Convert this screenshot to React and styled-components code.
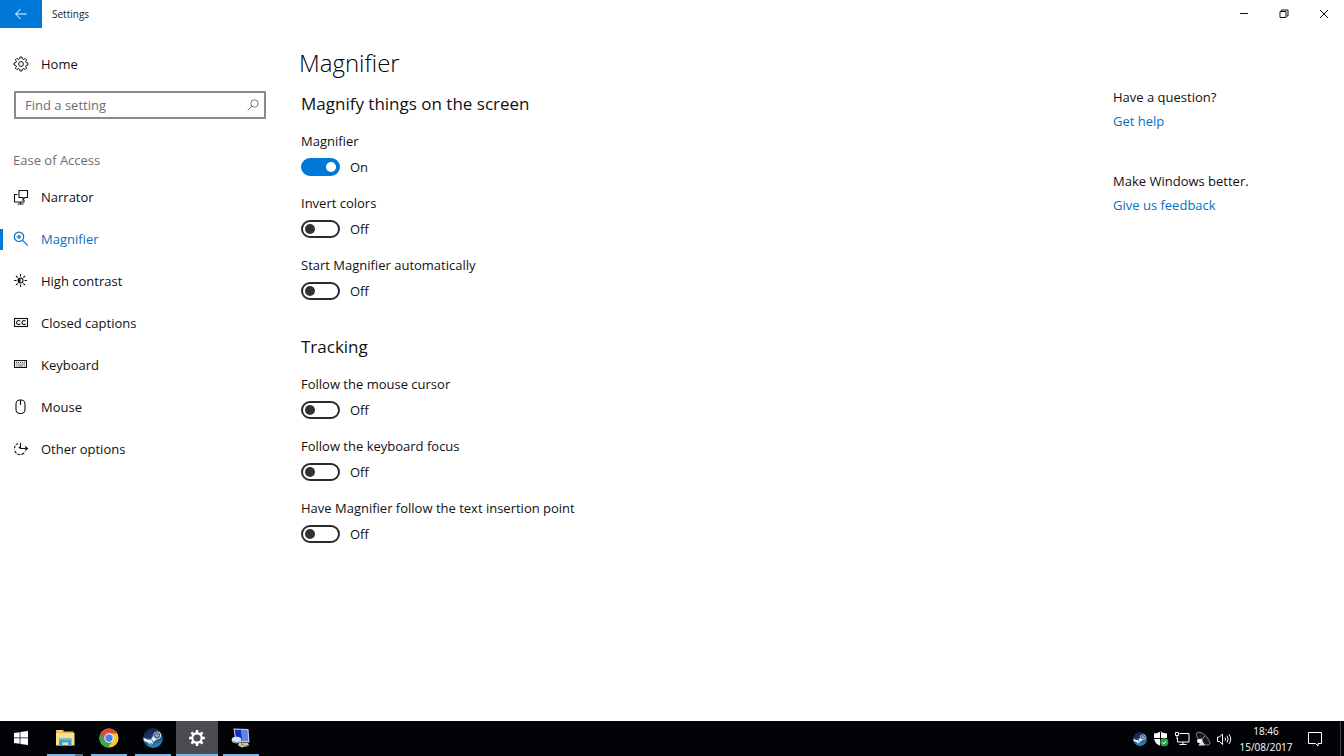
import React, { useState } from 'react';
import styled, { createGlobalStyle, css } from 'styled-components';

const GlobalStyle = createGlobalStyle`
  *, *::before, *::after { box-sizing: border-box; }
  body {
    margin: 0;
    background: #fff;
    color: #111;
    font-family: "Open Sans", "Noto Sans", sans-serif;
    font-size: 13px;
    line-height: 20px;
  }
  button, input { font: inherit; color: inherit; }
  h1, h2, p, ul { margin: 0; padding: 0; }
  svg { display: block; flex: none; }
`;

const Desktop = styled.div`
  display: flex;
  flex-direction: column;
  min-height: 100vh;
`;

const TitleBar = styled.header`
  display: flex;
  height: 28px;
`;

const BarButton = styled.button`
  display: flex;
  align-items: center;
  justify-content: center;
  width: ${(p) => (p.$accent ? 42 : 40)}px;
  border: 0;
  padding: 0;
  color: ${(p) => (p.$accent ? '#fff' : '#111')};
  background: ${(p) => (p.$accent ? '#0078d7' : 'transparent')};
`;

const WindowTitle = styled.span`
  flex: 1;
  padding-left: 10px;
  font-size: 10px;
  line-height: 28px;
  color: #222;
`;

const Body = styled.div`
  display: flex;
  flex: 1;
`;

const Sidebar = styled.nav`
  width: 280px;
  padding-top: 15px;
`;

const NavLink = styled.a`
  display: flex;
  align-items: center;
  height: 42px;
  text-decoration: none;
  color: ${(p) => (p.$active ? '#0a6fc2' : '#111')};
  &::before {
    content: "";
    width: 3px;
    height: 21px;
    margin-right: 10px;
    background: ${(p) => (p.$active ? '#0078d7' : 'transparent')};
  }
  svg { margin-right: 12px; }
`;

const NavList = styled.ul`
  list-style: none;
`;

const SearchBox = styled.form`
  display: flex;
  align-items: center;
  height: 28px;
  margin: 6px 14px 31px;
  padding: 0 5px 0 9px;
  border: 2px solid #8a8a8a;
  color: #777;
`;

const SearchInput = styled.input`
  flex: 1;
  min-width: 0;
  padding: 0;
  border: 0;
  outline: 0;
  background: transparent;
  &::placeholder { color: #6d6d6d; opacity: 1; }
`;

const IconButton = styled.button`
  display: flex;
  padding: 0;
  border: 0;
  background: transparent;
`;

const NavHeading = styled.h2`
  padding: 0 13px 6px;
  font-size: 13px;
  font-weight: 400;
  line-height: 20px;
  color: #6d6d6d;
`;

const Main = styled.main`
  flex: 1;
  padding: 17px 20px 40px 19px;
`;

const PageTitle = styled.h1`
  font-size: 24px;
  font-weight: 300;
  line-height: 36px;
  color: #000;
`;

const Section = styled.section`
  display: flex;
  flex-direction: column;
  gap: 16px;
  margin: ${(p) => (p.$first ? 9 : 32)}px 0 0 2px;
`;

const SectionTitle = styled.h2`
  margin-bottom: -3px;
  font-size: 17px;
  font-weight: 400;
  line-height: 28px;
`;

const Field = styled.div`
  display: flex;
  flex-direction: column;
  gap: 6px;
`;

const ToggleRow = styled.div`
  display: flex;
  align-items: center;
  gap: 10px;
  height: 20px;
`;

const Switch = styled.input`
  appearance: none;
  display: flex;
  align-items: center;
  width: 39px;
  height: 18px;
  margin: 0;
  padding: 0 2px;
  border: 2px solid #2b2b2b;
  border-radius: 9px;
  &::before {
    content: "";
    width: 10px;
    height: 10px;
    border-radius: 50%;
    background: #333;
  }
  &:checked {
    justify-content: flex-end;
    border-color: #0078d7;
    background: #0078d7;
  }
  &:checked::before { background: #fff; }
`;

const Help = styled.aside`
  display: flex;
  flex-direction: column;
  gap: 36px;
  width: 231px;
  padding-top: 57px;
  line-height: 24px;
`;

const HelpLink = styled.a`
  color: #0a6fc2;
  text-decoration: none;
`;

const Taskbar = styled.footer`
  display: flex;
  justify-content: space-between;
  height: 35px;
  background: #020306;
  color: #fff;
`;

const TaskGroup = styled.div`
  display: flex;
  gap: 2px;
`;

const TaskButton = styled.button`
  display: flex;
  flex-direction: column;
  align-items: center;
  justify-content: space-between;
  width: 42px;
  padding: 7px 0 0;
  border: 0;
  color: #fff;
  background: ${(p) => (p.$active ? '#4a4c50' : 'transparent')};
  ${(p) => p.$open && css`
    &::after {
      content: "";
      width: ${p.$active ? 42 : 36}px;
      height: 2px;
      background: ${p.$stacked ? 'linear-gradient(90deg, #76b9ed 28px, #48708f 28px)' : '#76b9ed'};
    }
  `}
`;

const Tray = styled.div`
  display: flex;
  align-items: center;
`;

const TrayButton = styled.button`
  display: flex;
  align-items: center;
  justify-content: center;
  width: ${(p) => (p.$wide ? 34 : 21)}px;
  height: 35px;
  padding: 0;
  border: 0;
  color: #fff;
  background: transparent;
`;

const Clock = styled.time`
  display: block;
  width: 64px;
  font-size: 10px;
  line-height: 16px;
  text-align: center;
`;

const PeekButton = styled.button`
  width: 4px;
  height: 35px;
  margin-left: 8px;
  padding: 0;
  border: 0;
  border-left: 1px solid #44464a;
  background: transparent;
`;

const Line = ({ size = 16, w = 1, children }) => (
  <svg width={size} height={size} viewBox={`0 0 ${size} ${size}`} fill="none" stroke="currentColor" strokeWidth={w} aria-hidden="true">
    {children}
  </svg>
);

function gearPath(c, outer, inner, teeth) {
  const pts = [];
  const step = (Math.PI * 2) / teeth;
  for (let i = 0; i < teeth; i += 1) {
    const a = i * step - Math.PI / 2;
    [[-0.3, inner], [-0.2, outer], [0.2, outer], [0.3, inner]].forEach(([o, r]) => {
      pts.push(`${(c + Math.cos(a + o * step) * r).toFixed(2)} ${(c + Math.sin(a + o * step) * r).toFixed(2)}`);
    });
  }
  return `M${pts.join('L')}Z`;
}

const HomeGear = () => (
  <Line>
    <path d={gearPath(8, 7, 5.4, 8)} />
    <circle cx="8" cy="8" r="2.4" />
  </Line>
);
const NarratorIcon = () => (
  <Line w={1.1}>
    <path d="M6 1.500h8.500v7h-2.500L10 10.800V8.500H6Z" />
    <path d="M4.500 5.500H1.500v7.500H11V11M7.500 13v2M4.500 15h6" />
  </Line>
);
const MagnifierIcon = () => (
  <Line w={1.2}>
    <circle cx="6" cy="5.800" r="4.700" />
    <path d="M9.400 9.200 14.800 14.600M6 3.500v4.600M3.700 5.800h4.600" />
  </Line>
);
const ContrastIcon = () => (
  <Line w={1.1}>
    <circle cx="7.500" cy="7.500" r="2.500" />
    <path d="M7.500 5a2.500 2.500 0 0 0 0 5Z" fill="currentColor" stroke="none" />
    <path d="M7.500 1v2.500M7.500 11.500V14M1 7.500h2.500M11.500 7.500H14M3 3l1.700 1.700M10.300 10.300 12 12M3 12l1.700-1.700M10.300 4.700 12 3" />
  </Line>
);
const CaptionsIcon = () => (
  <Line w={1.1}>
    <rect x="1.500" y="3.500" width="13" height="8" />
    <path d="M7.300 6.100C5.400 4.900 3.600 5.700 3.600 7.500s1.800 2.600 3.700 1.500M12.700 6.100C10.800 4.900 9 5.700 9 7.500s1.800 2.600 3.700 1.500" />
  </Line>
);
const KeyboardIcon = () => (
  <Line>
    <rect x="1.500" y="3.500" width="12" height="7" fill="#e4e4e4" />
    <path d="M3 5.500h9.500M3.500 7.200h8.500" strokeDasharray="1 1" stroke="#555" />
    <path d="M3 9h1M5 9h5M11 9h1" stroke="#777" />
  </Line>
);
const MouseIcon = () => (
  <Line w={1.1}>
    <rect x="3" y="1" width="9" height="13.500" rx="4" />
    <path d="M7.500 1v5" />
  </Line>
);
const OptionsIcon = () => (
  <Line w={1.1}>
    <path d="M5 2.500A5.600 5.600 0 0 0 1.500 8.500" strokeDasharray="2.500 1" />
    <path d="M1.800 10A5.700 5.700 0 0 0 12 10.800" strokeDasharray="3 1" />
    <path d="M7.500 1.800v5.700h6.700M12.200 5.500l2.200 2-2.200 2M5.800 5.800l1.700 1.700" />
  </Line>
);

const SteamIcon = ({ size }) => (
  <svg width={size} height={size} viewBox="0 0 20 20" aria-hidden="true">
    <defs>
      <linearGradient id={`steam${size}`} x1="0" y1="0" x2="0.300" y2="1">
        <stop offset="0" stopColor="#101c38" />
        <stop offset="0.500" stopColor="#18396b" />
        <stop offset="1" stopColor="#2b84b8" />
      </linearGradient>
    </defs>
    <circle cx="10" cy="10" r="10" fill={`url(#steam${size})`} />
    <path d="M0.500 9.700 5.500 11.800Q6.700 11 8 11.200L10.300 7.800A3.900 3.900 0 1 1 14 11.300L10.700 13.700A3 3 0 0 1 4.900 14.500L1 12.900Q0.400 11.300 0.500 9.700Z" fill="#e8edf2" />
    <circle cx="14" cy="7.400" r="2.700" fill="#8e9daf" stroke="#1c3458" strokeWidth="0.900" />
    <path d="M6.200 14.800A2 2 0 1 0 7.200 11.900" fill="none" stroke="#20518a" strokeWidth="0.700" />
  </svg>
);

const WindowsIcon = () => (
  <svg width="14" height="20" viewBox="0 0 14 20" fill="#fff" aria-hidden="true">
    <path d="M0 5 5.700 4.200V9.600H0ZM6.400 4.100 14 3V9.600H6.400ZM0 10.300H5.700V15.800L0 15ZM6.400 10.300H14V17L6.400 15.900Z" />
  </svg>
);
const FolderIcon = () => (
  <svg width="20" height="20" viewBox="0 0 20 20" aria-hidden="true">
    <path d="M1 2h7l1 1.500h9.500V6H1Z" fill="#e8b84c" />
    <path d="M2.500 3h4" stroke="#fff0bb" />
    <path d="M1 5h18.500v12.500H1Z" fill="#fbe08c" />
    <path d="M4 10.500h12.500V18H13v-3.500H7.500V18H4Z" fill="#3aa3cf" />
    <path d="M4 10.500h12.500v1.500H4Z" fill="#64bddd" />
  </svg>
);
const ChromeIcon = () => (
  <svg width="20" height="20" viewBox="0 0 20 20" aria-hidden="true">
    <circle cx="10" cy="10" r="9.600" fill="#f7c92f" />
    <path d="M10 10 1.700 5.200A9.600 9.600 0 0 0 9 19.600L14 12Z" fill="#3da45a" />
    <path d="M10 10 5.900 12.400 1.700 5.200A9.600 9.600 0 0 1 18.300 5.400H10Z" fill="#d94b3d" />
    <circle cx="10" cy="10" r="4.700" fill="#fff" />
    <circle cx="10" cy="10" r="3.700" fill="#4384e6" />
  </svg>
);
const TaskGear = () => (
  <svg width="20" height="20" viewBox="0 0 20 20" aria-hidden="true">
    <path d={`${gearPath(10, 8, 5.8, 8)}M13.600 10A3.600 3.600 0 1 0 6.400 10A3.600 3.600 0 1 0 13.600 10Z`} fill="#fff" fillRule="evenodd" />
  </svg>
);
const RemoteIcon = () => (
  <svg width="20" height="20" viewBox="0 0 20 20" aria-hidden="true">
    <path d="M2.500 0.500 17.500 1 18.500 14.500 4.500 14Z" fill="#c7d2e4" />
    <path d="M3.700 1.700 10 1.800 11.500 13 5.500 12.800Z" fill="#132fc0" />
    <path d="M10 1.800 16.500 2 17.300 13.200 11.500 13Z" fill="#5f82e6" />
    <path d="M8 14.500 17 15 18 17.500 11 19.500 7 17.500Z" fill="#d4c39a" />
    <path d="M10 15.500l4 3 3-1" stroke="#776a55" fill="none" />
    <ellipse cx="5.500" cy="12" rx="4.800" ry="3.300" fill="#dce6f4" />
    <path d="M1.500 13Q5 16 9.500 13.500" stroke="#7d93ba" fill="none" strokeWidth="1.300" />
  </svg>
);
const ShieldIcon = () => (
  <svg width="16" height="16" viewBox="0 0 16 16" aria-hidden="true">
    <path d="M7.500 0.500Q10.500 2.500 14 2.500V7Q14 12 7.500 15Q1 12 1 7V2.500Q4.500 2.500 7.500 0.500Z" fill="#fff" />
    <path d="M7.500 1v14M1 7.500h13" stroke="#020306" />
    <circle cx="11.300" cy="11.300" r="4" fill="#20a64b" />
    <path d="m9.300 11.400 1.500 1.500 2.600-3" stroke="#fff" fill="none" />
  </svg>
);
const NetworkIcon = () => (
  <Line>
    <path d="M5.500 2.500h9.500v8.500H3.500V7M9 11v3M5.500 13.500h7" />
    <path d="M1.500 1.500h3v3h-3ZM3 5v3" />
  </Line>
);
const SatelliteIcon = () => (
  <svg width="16" height="16" viewBox="0 0 16 16" aria-hidden="true">
    <path d="M2 1.500C5 0.500 10 3 12.500 7s3.200 6 1.200 6.800S7.500 13 4.500 9.500 0.300 2.500 2 1.500Z" fill="#15171b" stroke="#8c8c8c" />
    <path d="M2.500 8.500 7 7.500 8 11 10 14.500H3.500L5 11.500Z" fill="#ddd" />
    <circle cx="4" cy="10" r="2" fill="#fff" />
    <path d="m7 8 3-3" stroke="#999" />
  </svg>
);
const SpeakerIcon = () => (
  <Line>
    <path d="M1.500 6h2L6.500 3v10.500L3.500 10.500h-2ZM9 6.500q1.200 1.500 0 3.500M11 4.800q2.200 3 0 6.800M13 3.300q3.400 4.500 0 9.800" />
  </Line>
);

const NAV = [
  ['Narrator', NarratorIcon],
  ['Magnifier', MagnifierIcon],
  ['High contrast', ContrastIcon],
  ['Closed captions', CaptionsIcon],
  ['Keyboard', KeyboardIcon],
  ['Mouse', MouseIcon],
  ['Other options', OptionsIcon],
];

const SECTIONS = [
  {
    title: 'Magnify things on the screen',
    fields: [['magnifier', 'Magnifier', true], ['invert', 'Invert colors', false], ['autostart', 'Start Magnifier automatically', false]],
  },
  {
    title: 'Tracking',
    fields: [
      ['mouse', 'Follow the mouse cursor', false],
      ['keyboard', 'Follow the keyboard focus', false],
      ['caret', 'Have Magnifier follow the text insertion point', false],
    ],
  },
];

function ToggleField({ id, label, initial }) {
  const [on, setOn] = useState(initial);
  return (
    <Field>
      <label htmlFor={id}>{label}</label>
      <ToggleRow>
        <Switch id={id} type="checkbox" checked={on} onChange={() => setOn(!on)} />
        <span>{on ? 'On' : 'Off'}</span>
      </ToggleRow>
    </Field>
  );
}

export default function App() {
  return (
    <Desktop>
      <GlobalStyle />
      <TitleBar>
        <BarButton $accent type="button" aria-label="Back">
          <Line size={12}><path d="M0.500 6H11.500M5.500 1 0.700 6l4.800 5" /></Line>
        </BarButton>
        <WindowTitle>Settings</WindowTitle>
        <BarButton type="button" aria-label="Minimize">
          <Line size={10}><path d="M1 4.500h8" /></Line>
        </BarButton>
        <BarButton type="button" aria-label="Restore">
          <Line size={10}><path d="M1 2.500h6v6h-6ZM2.500 2V1h6.500v6H7.500" /></Line>
        </BarButton>
        <BarButton type="button" aria-label="Close">
          <Line size={10}><path d="m1 1 8 8M9 1 1 9" /></Line>
        </BarButton>
      </TitleBar>
      <Body>
        <Sidebar aria-label="Settings">
          <NavLink href="#home"><HomeGear />Home</NavLink>
          <SearchBox role="search" onSubmit={(e) => e.preventDefault()}>
            <SearchInput type="text" placeholder="Find a setting" aria-label="Find a setting" />
            <IconButton type="submit" aria-label="Search">
              <Line size={12}><circle cx="7.500" cy="4.500" r="3.700" /><path d="M4.800 7.200 0.700 11.300" /></Line>
            </IconButton>
          </SearchBox>
          <NavHeading>Ease of Access</NavHeading>
          <NavList>
            {NAV.map(([name, Icon]) => (
              <li key={name}>
                <NavLink href={`#${name.toLowerCase().replace(' ', '-')}`} $active={name === 'Magnifier'}>
                  <Icon />{name}
                </NavLink>
              </li>
            ))}
          </NavList>
        </Sidebar>
        <Main>
          <PageTitle>Magnifier</PageTitle>
          {SECTIONS.map((s, i) => (
            <Section key={s.title} $first={i === 0}>
              <SectionTitle>{s.title}</SectionTitle>
              {s.fields.map(([id, label, initial]) => (
                <ToggleField key={id} id={id} label={label} initial={initial} />
              ))}
            </Section>
          ))}
        </Main>
        <Help>
          <div>
            <p>Have a question?</p>
            <HelpLink href="#help">Get help</HelpLink>
          </div>
          <div>
            <p>Make Windows better.</p>
            <HelpLink href="#feedback">Give us feedback</HelpLink>
          </div>
        </Help>
      </Body>
      <Taskbar>
        <TaskGroup>
          <TaskButton type="button" aria-label="Start"><WindowsIcon /></TaskButton>
          <TaskButton type="button" aria-label="File Explorer" $open $stacked><FolderIcon /></TaskButton>
          <TaskButton type="button" aria-label="Chrome" $open><ChromeIcon /></TaskButton>
          <TaskButton type="button" aria-label="Steam" $open><SteamIcon size={20} /></TaskButton>
          <TaskButton type="button" aria-label="Settings" $open $active><TaskGear /></TaskButton>
          <TaskButton type="button" aria-label="Remote Desktop" $open><RemoteIcon /></TaskButton>
        </TaskGroup>
        <Tray>
          <TrayButton type="button" aria-label="Steam"><SteamIcon size={14} /></TrayButton>
          <TrayButton type="button" aria-label="Windows Defender"><ShieldIcon /></TrayButton>
          <TrayButton type="button" aria-label="Network"><NetworkIcon /></TrayButton>
          <TrayButton type="button" aria-label="Satellite"><SatelliteIcon /></TrayButton>
          <TrayButton type="button" aria-label="Volume"><SpeakerIcon /></TrayButton>
          <Clock dateTime="2017-08-15T18:46">18:46<br />15/08/2017</Clock>
          <TrayButton $wide type="button" aria-label="Action center">
            <Line><path d="M1.500 1.500h13v11h-3.500v2.500L8.500 12.500h-7Z" /></Line>
          </TrayButton>
          <PeekButton type="button" aria-label="Show desktop" />
        </Tray>
      </Taskbar>
    </Desktop>
  );
}
